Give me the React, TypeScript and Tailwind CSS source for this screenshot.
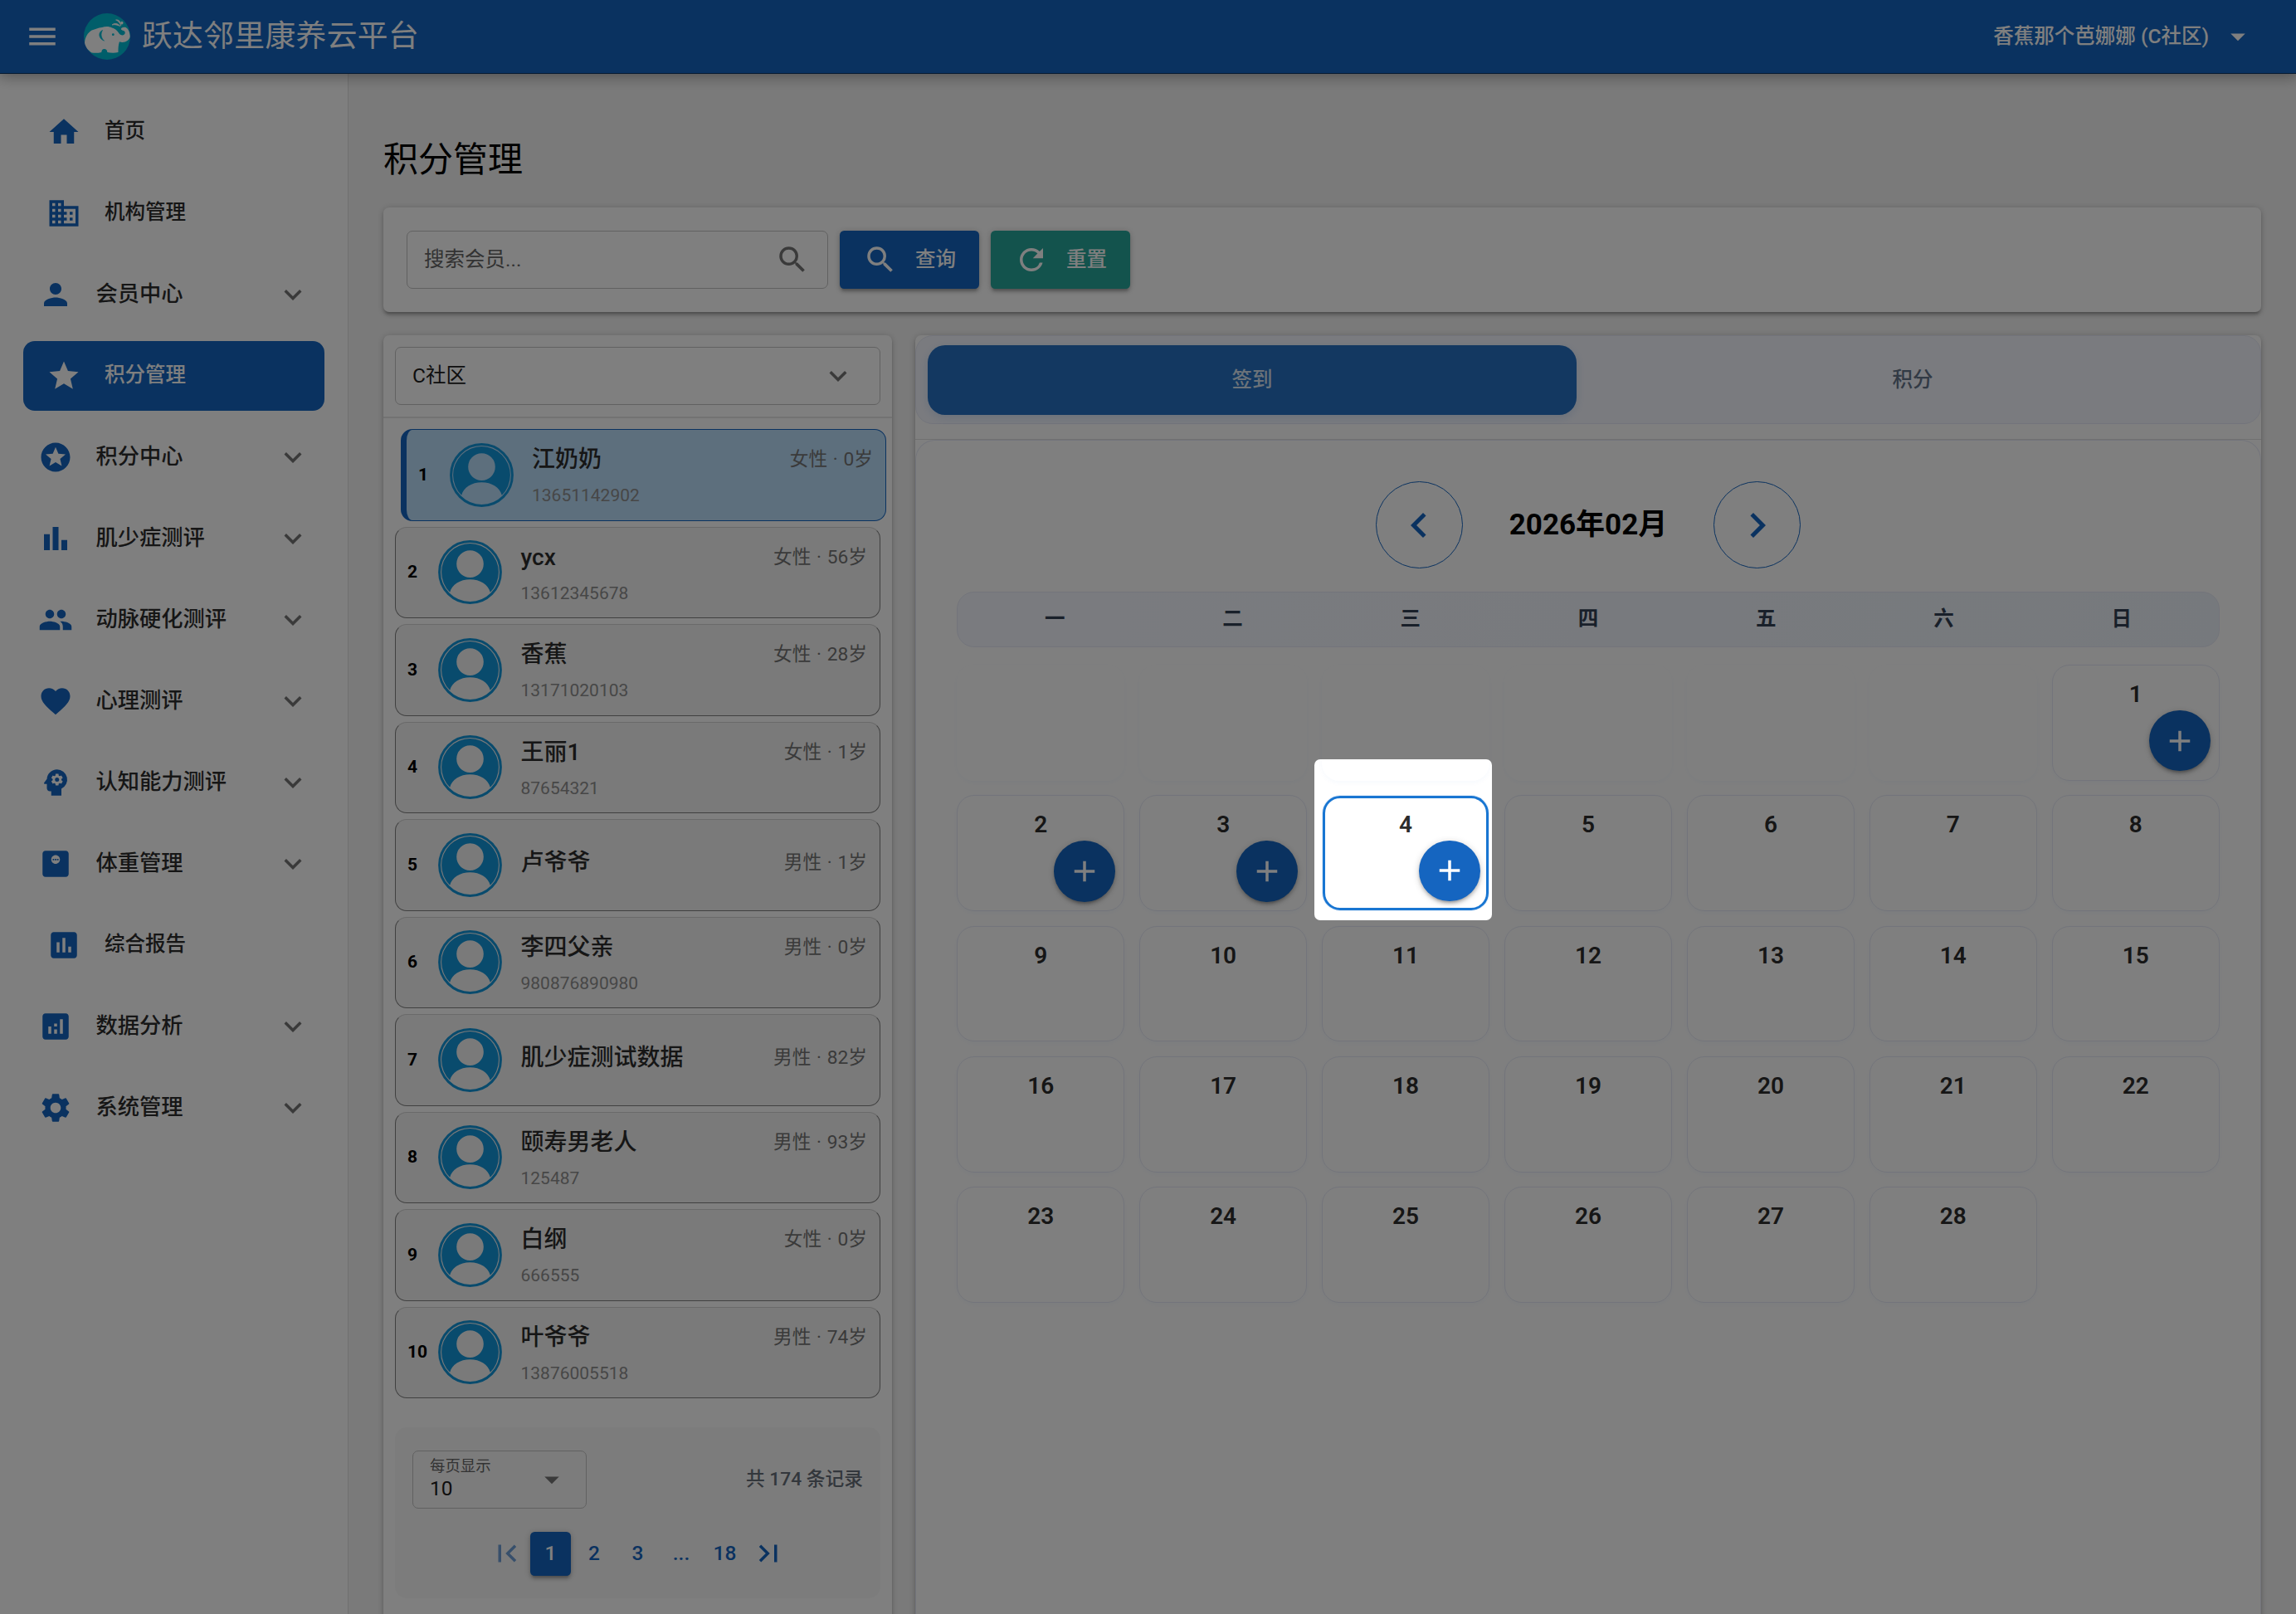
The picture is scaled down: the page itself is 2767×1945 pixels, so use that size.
import type { ReactNode } from 'react';
import type { IconType } from 'react-icons';
import clsx from 'clsx';
import {
  MdAdd,
  MdAnalytics,
  MdArrowDropDown,
  MdAssessment,
  MdBarChart,
  MdBusiness,
  MdChevronLeft,
  MdChevronRight,
  MdFavorite,
  MdFirstPage,
  MdHome,
  MdKeyboardArrowDown,
  MdLastPage,
  MdMenu,
  MdMonitorWeight,
  MdPeople,
  MdPerson,
  MdPsychology,
  MdRefresh,
  MdSearch,
  MdSettings,
  MdStar,
  MdStars,
} from 'react-icons/md';

type MenuItem = { label: string; icon: IconType; group?: boolean; active?: boolean };

const MENU: MenuItem[] = [
  { label: '首页', icon: MdHome },
  { label: '机构管理', icon: MdBusiness },
  { label: '会员中心', icon: MdPerson, group: true },
  { label: '积分管理', icon: MdStar, active: true },
  { label: '积分中心', icon: MdStars, group: true },
  { label: '肌少症测评', icon: MdBarChart, group: true },
  { label: '动脉硬化测评', icon: MdPeople, group: true },
  { label: '心理测评', icon: MdFavorite, group: true },
  { label: '认知能力测评', icon: MdPsychology, group: true },
  { label: '体重管理', icon: MdMonitorWeight, group: true },
  { label: '综合报告', icon: MdAssessment },
  { label: '数据分析', icon: MdAnalytics, group: true },
  { label: '系统管理', icon: MdSettings, group: true },
];

type Member = { name: string; phone?: string; sex: string; age: number };

const MEMBERS: Member[] = [
  { name: '江奶奶', phone: '13651142902', sex: '女性', age: 0 },
  { name: 'ycx', phone: '13612345678', sex: '女性', age: 56 },
  { name: '香蕉', phone: '13171020103', sex: '女性', age: 28 },
  { name: '王丽1', phone: '87654321', sex: '女性', age: 1 },
  { name: '卢爷爷', sex: '男性', age: 1 },
  { name: '李四父亲', phone: '980876890980', sex: '男性', age: 0 },
  { name: '肌少症测试数据', sex: '男性', age: 82 },
  { name: '颐寿男老人', phone: '125487', sex: '男性', age: 93 },
  { name: '白纲', phone: '666555', sex: '女性', age: 0 },
  { name: '叶爷爷', phone: '13876005518', sex: '男性', age: 74 },
];

const WEEKDAYS = ['一', '二', '三', '四', '五', '六', '日'];
const TODAY = 4;
// February 2026 starts on a Sunday, so six blanks lead the grid
const DAYS: (number | null)[] = [
  ...Array<null>(6).fill(null),
  ...Array.from({ length: 28 }, (_, i) => i + 1),
];

const CARD =
  'bg-white rounded-[7px] shadow-[0_1.75px_8.75px_rgba(0,0,0,0.2),0_3.5px_3.5px_rgba(0,0,0,0.14),0_5.25px_1.75px_-3.5px_rgba(0,0,0,0.12)]';

const Logo = () => (
  <svg viewBox="0 0 56 56" className="size-14 shrink-0">
    <circle cx="28" cy="28" r="28" fill="#00bcd4" />
    <path
      fill="#fff"
      d="M1 35.5C1.500 29 4.500 23.500 9.500 20.500C14 19.500 17 17.500 22 17C26 15.500 31 15.800 34 17.500C38.500 18.500 41 22 43 25C45.500 27.500 50 26.500 49.700 23C49.500 20.500 46.500 21.500 45 19.500C44.500 17.500 47.500 16.300 50.500 17C53.500 18.500 55.500 22.500 55.700 28C55 33 48.500 36.500 43 34.300C42 37 41.500 40 41.500 47C37 48 32 47.700 28.300 47C28.300 44.500 26.800 43 24.700 43C22.500 43 21.500 44.500 21.300 47C17.500 48 13 48 9.500 47.500C5.500 45 2 41 1 35.500Z"
    />
    <path d="M22.500 20.500C17.500 22.500 17 30 24.500 33.200C20.500 29.500 20 24.500 22.500 20.500Z" fill="#00bcd4" stroke="#00bcd4" strokeWidth="0.700" />
    <circle cx="35.300" cy="25.700" r="1.400" fill="#00bcd4" />
    <path d="M34 14C37 11.300 41 12 43.800 15.500C41 14.500 38 13 34 14Z" fill="#fff" stroke="#fff" strokeWidth="0.800" />
    <path d="M38.500 8C42.500 7 45 11 44.700 15C43.500 12 42 9.500 38.500 8Z" fill="#fff" stroke="#fff" strokeWidth="0.600" />
    <ellipse cx="45.900" cy="11.600" rx="1.600" ry="1.900" fill="#fff" />
  </svg>
);

// Head and shoulders stay see-through so the row colour shows
const Avatar = () => (
  <svg viewBox="0 0 77 77" className="size-[77px] shrink-0">
    <circle cx="38.5" cy="38.5" r="36.900" fill="none" stroke="#1296db" strokeWidth="3" />
    <path
      fill="#1296db"
      fillRule="evenodd"
      d="M14.200 62.800A34.400 34.400 0 1 1 62.800 62.800C60.500 53.500 50.500 47.300 38.500 47.300C26.500 47.300 16.500 53.500 14.200 62.800ZM38.500 12.300A16.300 16.300 0 1 0 38.500 44.900A16.300 16.300 0 1 0 38.500 12.300Z"
    />
  </svg>
);

const Header = () => (
  <header className="relative z-10 flex h-[89px] shrink-0 items-center border-b border-black/50 bg-[#1565c0] text-white shadow-[0_0_17.5px_3.5px_rgba(0,0,0,0.2),0_0_17.5px_rgba(0,0,0,0.24)]">
    <MdMenu className="ml-[30px] size-[42px]" />
    <div className="ml-[29px] flex items-center">
      <Logo />
      <h1 className="ml-[14px] text-[36.75px] leading-none tracking-[0.01em] whitespace-nowrap">跃达邻里康养云平台</h1>
    </div>
    <div className="mr-[49px] ml-auto flex items-center text-[24.5px] font-medium">
      <span>香蕉那个芭娜娜 (C社区)</span>
      <MdArrowDropDown className="ml-[14px] size-[42px]" />
    </div>
  </header>
);

const Sidebar = () => (
  <aside className="flex w-[420px] shrink-0 flex-col gap-[14px] border-r border-black/12 bg-white px-7 pt-[27.5px]">
    {MENU.map(({ label, icon: Icon, group, active }) => (
      <div
        key={label}
        className={clsx(
          'flex h-[84px] shrink-0 items-center rounded-[14px] font-medium',
          group ? 'px-[17.5px] text-[26.25px]' : 'px-7 text-[24.5px]',
          active ? 'bg-[#1565c0] text-white' : 'text-[#2c2c2c]',
        )}
      >
        <Icon className={clsx('mr-7 size-[42px]', !active && 'text-[#1565c0]')} />
        <span>{label}</span>
        {group && <MdKeyboardArrowDown className="ml-auto size-[42px] text-[#757575]" />}
      </div>
    ))}
  </aside>
);

const ActionButton = ({ icon: Icon, className, children }: { icon: IconType; className: string; children: ReactNode }) => (
  <button
    className={clsx(
      'flex h-[70px] w-[168px] items-center gap-[21px] rounded-[5.25px] px-7 text-[24.5px] font-medium whitespace-nowrap text-white',
      'shadow-[0_1.75px_8.75px_rgba(0,0,0,0.2),0_3.5px_3.5px_rgba(0,0,0,0.14),0_5.25px_1.75px_-3.5px_rgba(0,0,0,0.12)]',
      className,
    )}
  >
    <Icon className="size-[42px] shrink-0" />
    {children}
  </button>
);

const SearchBar = () => (
  <section className={clsx(CARD, 'flex h-[126px] items-center gap-[14px] px-7')}>
    <div className="flex h-[70px] w-[508px] items-center justify-between rounded-[7px] border border-[#c2c2c2] pr-[21px] pl-[20px] text-[24.5px] text-[#666]">
      <span>搜索会员...</span>
      <MdSearch className="size-[42px] text-[#757575]" />
    </div>
    <ActionButton icon={MdSearch} className="bg-[#1565c0]">查询</ActionButton>
    <ActionButton icon={MdRefresh} className="bg-[#26a69a]">重置</ActionButton>
  </section>
);

const MemberRow = ({ member, index }: { member: Member; index: number }) => {
  const selected = index === 0;
  return (
    <li
      className={clsx(
        'flex h-[110.5px] items-center rounded-[14px] border pr-[15px] pl-[14px]',
        selected
          ? 'translate-x-[7px] border-l-[7px] border-[#1565c0] bg-[#bbdefb]'
          : 'border-[#808080] border-t-[#d4d4d4] bg-[#f5f5f5]',
      )}
    >
      <span className={clsx('text-[21px] font-bold text-black', selected ? 'w-[37.5px]' : 'w-[37px]')}>{index + 1}</span>
      <Avatar />
      <div className={clsx('ml-[22.5px] flex grow flex-col', member.phone ? 'pt-[2.5px]' : 'pb-[6px]')}>
        <div className="flex items-center justify-between leading-[35px]">
          <span className="text-[28px] font-medium text-[#2c2c2c]">{member.name}</span>
          <span className="text-[22.75px] text-[#757575]">
            {member.sex} <span className="mx-[1px]">·</span> {member.age}岁
          </span>
        </div>
        {member.phone && <span className="mt-[12px] text-[21px] leading-[28px] text-[#8e8e8e]">{member.phone}</span>}
      </div>
    </li>
  );
};

const PageButton = ({ children, active }: { children: ReactNode; active?: boolean }) => (
  <button
    className={clsx(
      'flex h-[52.5px] w-[49px] items-center justify-center rounded-[5.25px] text-[24.5px] font-medium',
      active
        ? 'bg-[#1565c0] text-white shadow-[0_1.75px_8.75px_rgba(0,0,0,0.2),0_3.5px_3.5px_rgba(0,0,0,0.14),0_5.25px_1.75px_-3.5px_rgba(0,0,0,0.12)]'
        : 'text-[#1565c0]',
    )}
  >
    {children}
  </button>
);

const Pagination = () => (
  <div className="mx-[14px] mt-[35px] h-[206px] rounded-[14px] bg-[#f9f9f9] px-[21px] pt-7">
    <div className="flex items-center justify-between">
      <div className="flex h-[70px] w-[210px] items-center justify-between rounded-[7px] border border-[#c2c2c2] px-[20px]">
        <div className="flex flex-col pb-[4px]">
          <span className="text-[18.4px] leading-[24px] text-[#666]">每页显示</span>
          <span className="text-[24.5px] leading-[29px] text-[#1d1d1d]">10</span>
        </div>
        <MdArrowDropDown className="size-[42px] text-[#757575]" />
      </div>
      <span className="text-[22.75px] font-medium text-[#666e78]">共 174 条记录</span>
    </div>
    <div className="mt-7 flex items-center justify-center gap-[3.5px]">
      <span className="opacity-60">
        <PageButton><MdFirstPage className="size-[42px]" /></PageButton>
      </span>
      <PageButton active>1</PageButton>
      <PageButton>2</PageButton>
      <PageButton>3</PageButton>
      <PageButton>...</PageButton>
      <PageButton>18</PageButton>
      <PageButton><MdLastPage className="size-[42px]" /></PageButton>
    </div>
  </div>
);

const MemberPanel = () => (
  <section className={clsx(CARD, 'w-[613px] shrink-0')}>
    <div className="border-b-2 border-black/10 p-[14px]">
      <div className="flex h-[70px] items-center justify-between rounded-[7px] border border-[#c2c2c2] pr-[29px] pl-[20px] text-[24.5px] text-[#1d1d1d]">
        <span>C社区</span>
        <MdKeyboardArrowDown className="size-[42px] text-[#757575]" />
      </div>
    </div>
    <ul className="flex flex-col gap-[7px] px-[14px] pt-[13px]">
      {MEMBERS.map((member, i) => (
        <MemberRow key={member.name} member={member} index={i} />
      ))}
    </ul>
    <Pagination />
  </section>
);

const DayCell = ({ day }: { day: number | null }) => {
  if (day === null) {
    return <div className="h-[139.75px] rounded-[21px] shadow-[0_2px_6px_rgba(21,101,192,0.04)]" />;
  }
  return (
    <div
      className={clsx(
        'relative rounded-[21px] text-center text-[28px] font-semibold text-[#2c2c2c]',
        day === TODAY
          ? 'm-px h-[137.75px] border-[3px] border-[#1976d2] pt-[11px] shadow-[0_0_0_1px_#e3eefa]'
          : 'h-[139.75px] border border-[#e6e9f6] pt-[14px] shadow-[0_2px_6px_rgba(21,101,192,0.04)]',
      )}
    >
      {day}
      {day <= TODAY && (
        <button
          className={clsx(
            'absolute flex size-[73.5px] items-center justify-center rounded-full bg-[#1565c0] text-white',
            'shadow-[0_1.75px_8.75px_rgba(0,0,0,0.2),0_3.5px_3.5px_rgba(0,0,0,0.14),0_5.25px_1.75px_-3.5px_rgba(0,0,0,0.12)]',
            day === TODAY ? 'right-[7.5px] bottom-[8px]' : 'right-[10.5px] bottom-[10.5px]',
          )}
        >
          <MdAdd className="size-[42px]" />
        </button>
      )}
    </div>
  );
};

const MonthButton = ({ icon: Icon }: { icon: IconType }) => (
  <button className="flex size-[105px] items-center justify-center rounded-full border border-[#1565c0] text-[#1565c0]">
    <Icon className="size-[60px]" />
  </button>
);

const CalendarPanel = () => (
  <section className={clsx(CARD, 'flex grow flex-col')}>
    <div className="border-b border-black/12 pb-[18px]">
      <div className="flex h-[107px] gap-[14px] rounded-[21px] border border-[#e6e9f6] bg-[#f5f7ff] pt-[11px] pl-[14px]">
        <div className="flex h-[84px] w-[782px] items-center justify-center rounded-[21px] bg-[#2670c2] text-[24.5px] font-medium text-[#d6e4f3] shadow-[0_3px_12px_rgba(21,101,192,0.15)]">
          签到
        </div>
        <div className="flex h-[84px] w-[782px] items-center justify-center text-[24.5px] font-medium text-[#64748b]">积分</div>
      </div>
    </div>
    <div className="grow rounded-t-[24px] border border-b-0 border-[#e6e9f6] px-[49px] pt-[49px]">
      <div className="flex items-center justify-center gap-[56px]">
        <MonthButton icon={MdChevronLeft} />
        <h3 className="text-[35px] leading-none font-bold text-black">2026年02月</h3>
        <MonthButton icon={MdChevronRight} />
      </div>
      <div className="mt-7 grid h-[67px] grid-cols-7 items-center rounded-[21px] border border-[#e6e9f6] bg-linear-to-r from-[#f5f7ff] to-[#edf3fa] px-[10px] text-center text-[24.5px] font-bold text-[#334155]">
        {WEEKDAYS.map((day) => (
          <span key={day}>{day}</span>
        ))}
      </div>
      <div className="mt-[21px] grid grid-cols-7 gap-[17.5px]">
        {DAYS.map((day, i) => (
          <DayCell key={i} day={day} />
        ))}
      </div>
    </div>
  </section>
);

export default function App() {
  return (
    <div className="relative flex h-[1945px] w-[2767px] flex-col overflow-hidden bg-[#f5f5f5] font-[Roboto,'Noto_Sans_CJK_SC',sans-serif]">
      <Header />
      <div className="flex min-h-0 grow">
        <Sidebar />
        <main className="flex grow flex-col px-[42px]">
          <h2 className="pt-[74px] text-[42px] leading-[59px] text-black">积分管理</h2>
          <div className="mt-7">
            <SearchBar />
          </div>
          <div className="mt-7 flex h-[1600px] shrink-0 gap-7">
            <MemberPanel />
            <CalendarPanel />
          </div>
        </main>
      </div>
      {/* guide mask: everything around the spotlight is dimmed */}
      <div className="absolute top-[915px] left-[1584px] z-20 h-[193.5px] w-[213.5px] rounded-[7px] shadow-[0_0_0_3000px_rgba(0,0,0,0.5)]" />
    </div>
  );
}
